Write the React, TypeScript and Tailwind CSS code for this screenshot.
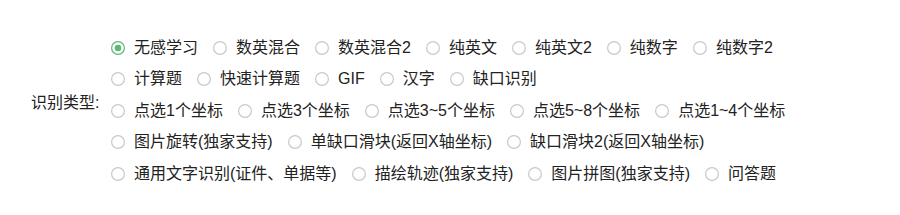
import React from "react";

const rows: string[][] = [
  ["无感学习", "数英混合", "数英混合2", "纯英文", "纯英文2", "纯数字", "纯数字2"],
  ["计算题", "快速计算题", "GIF", "汉字", "缺口识别"],
  ["点选1个坐标", "点选3个坐标", "点选3~5个坐标", "点选5~8个坐标", "点选1~4个坐标"],
  ["图片旋转(独家支持)", "单缺口滑块(返回X轴坐标)", "缺口滑块2(返回X轴坐标)"],
  ["通用文字识别(证件、单据等)", "描绘轨迹(独家支持)", "图片拼图(独家支持)", "问答题"],
];

function Radio({ checked }: { checked: boolean }) {
  return (
    <svg width="14" height="14" viewBox="0 0 14 14" className="shrink-0">
      <circle
        cx="7"
        cy="7"
        r="6.4"
        fill="white"
        stroke={checked ? "#5FB878" : "#c9c9c9"}
        strokeWidth="1.2"
      />
      {checked && <circle cx="7" cy="7" r="3.3" fill="#5FB878" />}
    </svg>
  );
}

export default function App() {
  return (
    <div
      className="w-[900px] h-[215px] bg-white text-[#222] text-[16px] pt-[32px]"
      style={{ fontFamily: '"Liberation Sans", "Noto Sans CJK SC", sans-serif' }}
    >
      <div className="flex items-center">
        <div className="w-[111px] pl-[31px] pb-[15px] whitespace-nowrap">识别类型:</div>
        <div className="flex flex-col">
          {rows.map((row, ri) => (
            <div key={ri} className="flex items-center h-[31.5px] whitespace-nowrap">
              {row.map((label, i) => (
                <div key={label} className="flex items-center mr-[15px]">
                  <Radio checked={ri === 0 && i === 0} />
                  <span className="ml-[9px] leading-none">{label}</span>
                </div>
              ))}
            </div>
          ))}
        </div>
      </div>
    </div>
  );
}
